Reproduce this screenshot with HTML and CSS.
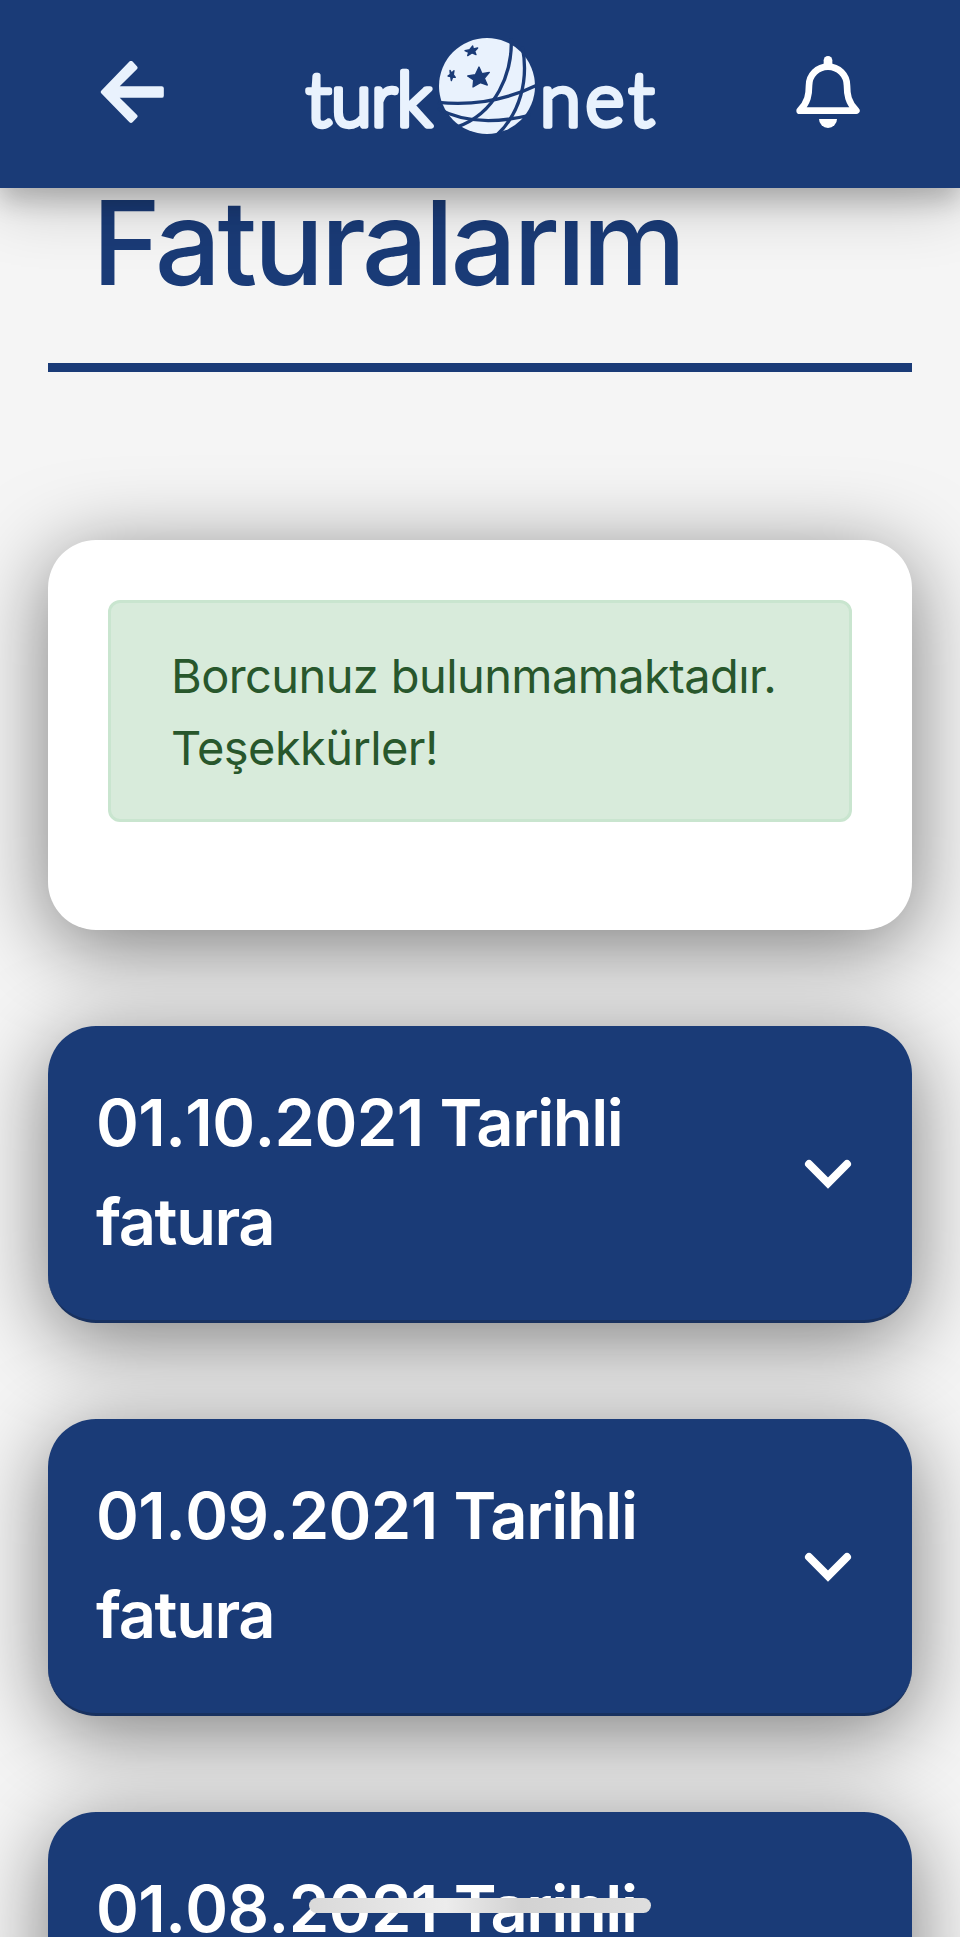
FILE: index.html
```html
<!DOCTYPE html>
<html lang="tr">
  <head>
    <meta charset="UTF-8" />
    <meta name="viewport" content="width=device-width, initial-scale=1.0" />
    <title>Faturalarım | TurkNet</title>
    <link rel="stylesheet" href="styles.css">
  </head>
  <body>
    <!-- Header -->
    <header class="header">
      <a class="back" href="#">
        <svg width="64" height="62" viewBox="61 63 192 186">
          <path d="M70 156 L154 69 L167 83 L105 145 H246 V167 H105 L167 229 L154 242 Z" />
        </svg>
      </a>
      <svg class="logo" width="350" height="98" viewBox="305 37 350 98">
        <text class="logo-text" x="306" y="126" textLength="126">turk</text>
        <text class="logo-text" x="540" y="126" textLength="114">net</text>
        <g transform="translate(430 30) scale(0.33333)">
          <circle class="globe" cx="171" cy="168" r="144" />
          <g class="globe-lines">
            <path d="M244 25 C247 130 200 250 78 292" />
            <path d="M277 50 C297 150 270 250 200 316" />
            <path d="M24 217 C130 228 225 212 322 165" />
            <path d="M24 236 C100 278 200 280 302 255" />
          </g>
          <g class="stars">
            <path d="M147 111 L156 131 L178 127 L163 145 L172 165 L151 158 L129 171 L131 150 L113 138 L136 134 Z" />
            <path d="M128 48 L130 57 L143 54 L134 64 L138 74 L126 69 L113 77 L116 67 L105 62 L119 59 Z" />
            <path d="M60 121 L65 129 L72 122 L70 134 L76 142 L68 141 L64 152 L62 140 L54 138 L61 133 Z" />
          </g>
        </g>
      </svg>
      <a class="bell" href="#">
        <svg width="64" height="72" viewBox="48 48 192 216">
          <path class="bell-body" d="M59 212 C84 187 87 163 87 137 A57 57 0 0 1 201 137 C201 163 204 187 229 212 Z" />
          <path class="bell-top" d="M144 61 V72" />
          <path class="bell-clapper" d="M117 237 H171 A27 27 0 0 1 117 237 Z" />
        </svg>
      </a>
    </header>

    <!-- Invoices -->
    <main class="content">
      <h1 class="title">Faturalarım</h1>

      <div class="card">
        <div class="alert">Borcunuz bulunmamaktadır. Teşekkürler!</div>
      </div>

      <div class="invoice">
        <h2><span class="date">01.10.2021</span> Tarihli fatura</h2>
        <svg class="chevron" width="48" height="30" viewBox="0 0 48 30">
          <path d="M5 5 L24 24 L43 5" />
        </svg>
      </div>

      <div class="invoice">
        <h2><span class="date">01.09.2021</span> Tarihli fatura</h2>
        <svg class="chevron" width="48" height="30" viewBox="0 0 48 30">
          <path d="M5 5 L24 24 L43 5" />
        </svg>
      </div>

      <div class="invoice">
        <h2><span class="date">01.08.2021</span> Tarihli fatura</h2>
        <svg class="chevron" width="48" height="30" viewBox="0 0 48 30">
          <path d="M5 5 L24 24 L43 5" />
        </svg>
      </div>
    </main>

    <div class="home-bar"></div>
  </body>
</html>
```
FILE: styles.css
```css
* {
  box-sizing: border-box;
}

body {
  font-family: Inter, "Liberation Sans", sans-serif;
  background-color: #f5f5f5;
  margin: 0;
  height: 1937px;
  overflow: hidden;
}

/* Header Styles */
.header {
  position: relative;
  z-index: 2;
  display: flex;
  justify-content: space-between;
  align-items: flex-start;
  height: 188px;
  padding: 37px 100px 0;
  background-color: #1a3b77;
  box-shadow: 0 12px 24px rgba(0, 0, 0, 0.2), 0 18px 60px rgba(0, 0, 0, 0.19);
}

.header svg {
  display: block;
}

.back {
  margin-top: 24px;
}

.back path {
  fill: #e9f2fd;
  stroke: #e9f2fd;
  stroke-width: 13;
  stroke-linejoin: round;
}

.bell {
  margin-top: 19px;
}

.bell-body {
  fill: none;
  stroke: white;
  stroke-width: 20;
  stroke-linejoin: round;
}

.bell-top {
  stroke: white;
  stroke-width: 26;
  stroke-linecap: round;
}

.bell-clapper {
  fill: white;
}

/* Logo */
.logo {
  overflow: visible;
}

.logo-text {
  font-family: Lato, sans-serif;
  font-size: 74px;
  font-weight: 300;
  fill: #e9f2fd;
  stroke: #e9f2fd;
  stroke-width: 5.5;
  stroke-linejoin: round;
}

.globe {
  fill: #e9f2fd;
}

.globe-lines {
  fill: none;
  stroke: #1a3b77;
  stroke-width: 10;
}

.stars {
  fill: #1a3b77;
  stroke: #1a3b77;
  stroke-width: 4;
  stroke-linejoin: round;
}

/* Main content styles */
.content {
  padding: 0 48px;
}

.title {
  margin: 0 0 168px;
  padding: 0 44px;
  height: 184px;
  border-bottom: 9px solid #1a3b77;
  color: #1a3b77;
  font-size: 117px;
  font-weight: 550;
  line-height: 109px;
  letter-spacing: -3.6px;
}

.card {
  height: 390px;
  margin-bottom: 96px;
  padding: 60px;
  background-color: white;
  border-radius: 48px;
  box-shadow: 0 16px 84px rgba(0, 0, 0, 0.5);
}

.alert {
  height: 222px;
  padding: 37px 60px;
  border: 3px solid #c9e5cf;
  border-radius: 12px;
  background-color: #d8ebdb;
  color: #28572c;
  font-size: 47px;
  line-height: 72px;
  letter-spacing: -0.6px;
}

.invoice {
  display: flex;
  justify-content: space-between;
  align-items: center;
  height: 297px;
  margin-bottom: 96px;
  padding: 0 60px 0 48px;
  border-bottom: 3px solid #18315f;
  border-radius: 48px;
  background-color: #1a3b77;
  color: white;
  box-shadow: 0 16px 84px rgba(0, 0, 0, 0.5);
}

.invoice h2 {
  width: 600px;
  margin: 0;
  padding-bottom: 2px;
  font-size: 65px;
  font-weight: 600;
  line-height: 99px;
  letter-spacing: -1.4px;
  word-spacing: 1px;
}

.invoice .date {
  font-kerning: none;
  letter-spacing: -0.6px;
}

.chevron {
  margin-top: 2px;
}

.chevron path {
  fill: none;
  stroke: white;
  stroke-width: 8;
  stroke-linecap: round;
}

/* Phone home bar, drawn over the page */
.home-bar {
  position: fixed;
  left: 309px;
  bottom: 24px;
  width: 342px;
  height: 15px;
  border-radius: 8px;
  background: linear-gradient(to right, #d9d9d9, #ececec 40%, #d2d2d2 62%, #dedede);
}
```
